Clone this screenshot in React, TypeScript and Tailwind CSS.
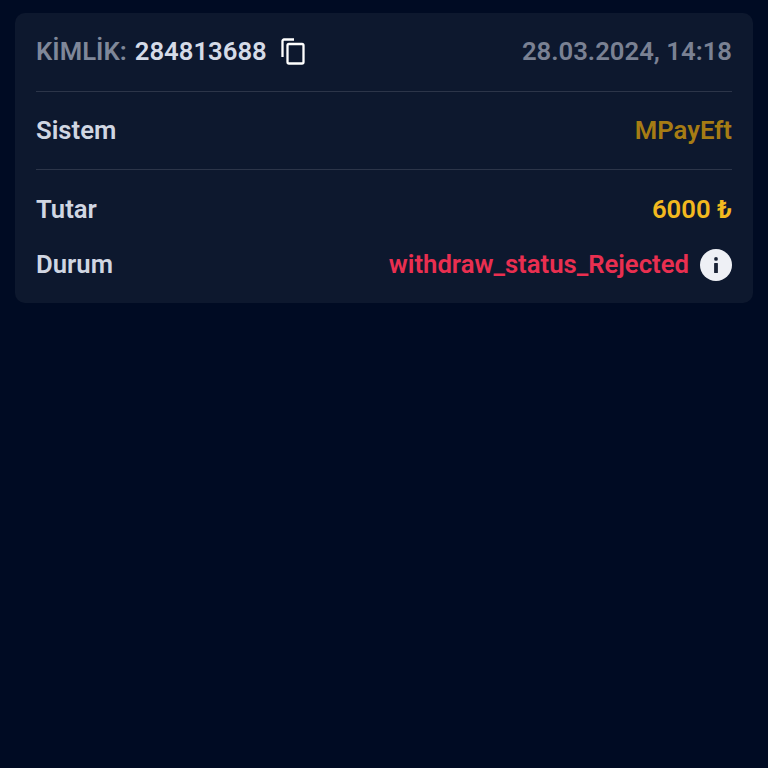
export default function App() {
  return (
    <div className="min-h-[768px] bg-[#000b23] p-[15px] pt-[13px] font-['Roboto',sans-serif] text-[25.7px] font-semibold leading-[32px]">
      <div className="rounded-[10px] bg-[#0d182e] px-[21px] pb-[22px]">
        {/* Header */}
        <div className="flex h-[79px] items-center justify-between border-b-[1.5px] border-[#2c3549] pb-[2px]">
          <div className="flex items-center">
            <span className="text-[#7f8799]">KİMLİK:</span>
            <span className="ml-[8px] text-[#d5dbe7]">284813688</span>
            <svg className="ml-[14px]" width="24" height="27" viewBox="0 0 24 27" fill="none" stroke="#fff" strokeWidth="2.3">
              <path d="M13 1.5H3a1.5 1.5 0 0 0-1.5 1.5v16" />
              <rect x="6.5" y="6" width="16" height="19.5" rx="1.5" />
            </svg>
          </div>
          <span className="text-[#7a8193]">28.03.2024, 14:18</span>
        </div>

        <div className="flex h-[78px] items-center justify-between border-b-[1.5px] border-[#2c3549] pb-[2px]">
          <span className="text-[#d0d6e2]">Sistem</span>
          <span className="text-[#a67c14]">MPayEft</span>
        </div>

        <div className="mt-[23px] flex h-[32px] items-center justify-between">
          <span className="text-[#d0d6e2]">Tutar</span>
          <span className="text-[#f2b91f]">6000 ₺</span>
        </div>

        <div className="mt-[24px] flex h-[32px] items-center justify-between">
          <span className="-translate-y-px text-[#d0d6e2]">Durum</span>
          <div className="flex items-center gap-[11px]">
            <span className="-translate-y-px text-[#e92f50]">withdraw_status_Rejected</span>
            <span className="flex h-[32px] w-[32px] items-center justify-center rounded-full bg-[#eef0f5]">
              <svg width="6" height="16" viewBox="0 0 6 16" fill="#1a2336">
                <circle cx="3" cy="1.9" r="1.9" />
                <rect x="1.1" y="6" width="3.8" height="10" rx="0.5" />
              </svg>
            </span>
          </div>
        </div>
      </div>
    </div>
  );
}
